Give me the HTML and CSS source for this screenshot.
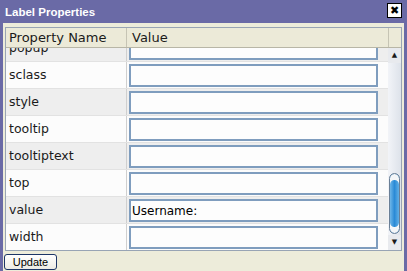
FILE: index.html
```html
<!DOCTYPE html>
<html lang="en">

<head>
  <meta charset="UTF-8" />
  <title>Label Properties</title>
  <link rel="stylesheet" href="styles.css">
</head>

<body>
  <div class="window">
    <div class="titlebar">
      <span class="title">Label Properties</span>
      <button class="close-btn">&#x2716;</button>
    </div>

    <div class="window-body">
      <!-- Property grid -->
      <div class="grid">
        <div class="grid-head">
          <div class="col-name">Property Name</div>
          <div class="col-value">Value</div>
          <div class="col-bar"></div>
        </div>
        <div class="grid-body">
          <div class="rows">
            <div class="rows-inner">
              <div class="row odd"><div class="cell-name">popup</div><div class="cell-value"><input type="text" /></div></div>
              <div class="row"><div class="cell-name">sclass</div><div class="cell-value"><input type="text" /></div></div>
              <div class="row odd"><div class="cell-name">style</div><div class="cell-value"><input type="text" /></div></div>
              <div class="row"><div class="cell-name">tooltip</div><div class="cell-value"><input type="text" /></div></div>
              <div class="row odd"><div class="cell-name">tooltiptext</div><div class="cell-value"><input type="text" /></div></div>
              <div class="row"><div class="cell-name">top</div><div class="cell-value"><input type="text" /></div></div>
              <div class="row odd"><div class="cell-name">value</div><div class="cell-value"><input type="text" value="Username:" /></div></div>
              <div class="row"><div class="cell-name">width</div><div class="cell-value"><input type="text" /></div></div>
            </div>
          </div>
          <!-- Scrollbar -->
          <div class="scrollbar">
            <div class="scroll-btn">&#9650;</div>
            <div class="scroll-track">
              <div class="scroll-thumb"></div>
            </div>
            <div class="scroll-btn">&#9660;</div>
          </div>
        </div>
      </div>

      <div class="actions">
        <button class="update-btn">Update</button>
      </div>
    </div>
  </div>
</body>

</html>
```

FILE: styles.css
```css
body {
  margin: 0;
  background-color: #edecda;
}

.window {
  width: 407px;
  height: 271px;
  box-sizing: border-box;
  border-left: 3px solid #6a6aa6;
  border-right: 3px solid #6a6aa6;
  background-color: #edecda;
  display: flex;
  flex-direction: column;
  overflow: hidden;
}

.titlebar {
  height: 23px;
  margin: 0 -3px;
  padding: 0 5px 0 5px;
  background-color: #6a6aa6;
  display: flex;
  align-items: center;
  justify-content: space-between;
}

.title {
  font-family: "Liberation Sans", Arial, sans-serif;
  font-weight: bold;
  font-size: 11.5px;
  color: #ffffff;
}

.close-btn {
  width: 15px;
  height: 15px;
  padding: 0;
  margin-top: -2px;
  border: 1px solid #000000;
  background-color: #ffffff;
  color: #000000;
  font-size: 11px;
  line-height: 13px;
  font-family: "DejaVu Sans", sans-serif;
}

.window-body {
  flex: 1;
  padding: 4px 2px 0 2px;
  display: flex;
  flex-direction: column;
}

.grid {
  border: 1px solid #98a4b4;
  display: flex;
  flex-direction: column;
  font-family: "DejaVu Sans", sans-serif;
  color: #1a1a1a;
}

.grid-head {
  height: 19px;
  display: flex;
  background-color: #ecead8;
  border-bottom: 1px solid #b8b6a6;
  font-size: 13px;
}

.col-name {
  width: 117px;
  padding-left: 3px;
  line-height: 20px;
  border-right: 1px solid #c6c4b4;
}

.col-value {
  flex: 1;
  padding-left: 5px;
  line-height: 20px;
  border-right: 1px solid #c6c4b4;
}

.col-bar {
  width: 12px;
}

.grid-body {
  display: flex;
  height: 202px;
}

.rows {
  flex: 1;
  overflow: hidden;
}

/* scrolled down: first row half hidden */
.rows-inner {
  margin-top: -13px;
}

.row {
  display: flex;
  height: 26px;
  border-bottom: 1px solid #e2e2e2;
  background-color: #fcfcfc;
}

.row.odd {
  background-color: #eeeeee;
}

.row:last-child {
  border-bottom: none;
}

.cell-name {
  width: 117px;
  padding-left: 3px;
  font-size: 12.5px;
  line-height: 26px;
  border-right: 1px solid #cfcfcf;
}

.cell-value {
  flex: 1;
  padding: 2px 0 0 2px;
}

.cell-value input {
  width: 249px;
  height: 23px;
  box-sizing: border-box;
  border: 2px solid #7f9dbe;
  background-color: #fdfdfd;
  padding: 0 1px;
  font-family: "DejaVu Sans", sans-serif;
  font-size: 12px;
  color: #000000;
}

.scrollbar {
  width: 13px;
  display: flex;
  flex-direction: column;
  background: linear-gradient(to right, #f2f4f8, #dde2ea);
}

.scroll-btn {
  height: 15px;
  font-size: 7px;
  line-height: 15px;
  text-align: center;
  color: #1a1a1a;
  background-color: #e8eaee;
}

.scroll-track {
  flex: 1;
  display: flex;
  flex-direction: column;
  justify-content: flex-end;
  padding-bottom: 1px;
}

.scroll-thumb {
  height: 61px;
  margin: 0 1px;
  box-sizing: border-box;
  border: 1px solid #6a7f96;
  border-radius: 6px;
  background: linear-gradient(to right, #6eb6e8, #2a8ad6 50%, #62b0e6);
  box-shadow: inset 0 6px 0 #f4f6f8, inset 0 -6px 0 #f4f6f8;
}

.actions {
  padding: 1px 0 0 0;
  margin-left: -1px;
}

.update-btn {
  width: 53px;
  height: 16px;
  padding: 0;
  border: 1px solid #1c3566;
  border-radius: 3px;
  background: linear-gradient(#ffffff, #ecebe4);
  font-family: "Liberation Sans", Arial, sans-serif;
  font-size: 11px;
  color: #000000;
}
```
